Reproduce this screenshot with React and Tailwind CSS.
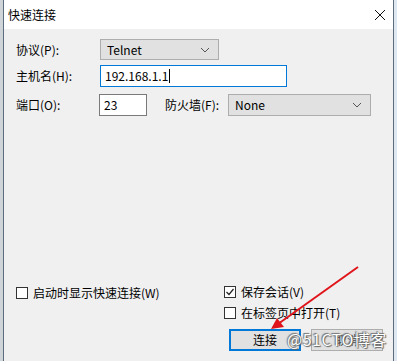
import React from 'react'

const font = { fontFamily: '"Noto Sans CJK SC", "Liberation Sans", sans-serif' }

function Chevron() {
  return (
    <svg width="10" height="6" viewBox="0 0 10 6" className="shrink-0">
      <polyline points="1,1 5,5 9,1" fill="none" stroke="#555" strokeWidth="1" />
    </svg>
  )
}

function Select({ value, className }) {
  return (
    <div
      className={`flex items-center justify-between border border-[#adadad] bg-[#e1e1e1] pl-[6px] pr-[8px] ${className}`}
    >
      <span className="text-[12px] text-black">{value}</span>
      <Chevron />
    </div>
  )
}

function Checkbox({ checked, label }) {
  return (
    <div className="flex items-center h-[13px]">
      <div className="w-[12px] h-[12px] border border-[#333] bg-white flex items-center justify-center">
        {checked && (
          <svg width="10" height="10" viewBox="0 0 10 10">
            <polyline points="1.5,5 4,7.5 8.5,2" fill="none" stroke="#222" strokeWidth="1.2" />
          </svg>
        )}
      </div>
      <span className="ml-[5px] text-[12px] text-black leading-none">{label}</span>
    </div>
  )
}

export default function App() {
  return (
    <div className="w-[397px] h-[361px] bg-[#dfe8f0] relative overflow-hidden" style={font}>
      <div className="absolute left-0 top-0 w-[3px] h-full bg-[#cfd4d8]" />
      <div className="ml-[3px] w-[391px] h-full border-l border-r border-[#5d6d7e] flex flex-col">
        {/* Title bar */}
        <div className="h-[29px] bg-white flex items-center justify-between pl-[4px] pr-[6px]">
          <span className="text-[12px] text-black">快速连接</span>
          <svg width="12" height="12" viewBox="0 0 12 12" className="mr-[1px]">
            <line x1="1" y1="1" x2="11" y2="11" stroke="#111" strokeWidth="1" />
            <line x1="11" y1="1" x2="1" y2="11" stroke="#111" strokeWidth="1" />
          </svg>
        </div>

        {/* Body */}
        <div className="flex-1 bg-[#f0f0f0] pl-[12px] flex flex-col">
          <div className="mt-[10px] flex items-center h-[21px]">
            <span className="w-[84px] text-[12px] text-black">协议(P):</span>
            <Select value="Telnet" className="w-[119px] h-[21px]" />
          </div>

          <div className="mt-[5px] flex items-center h-[22px]">
            <span className="w-[84px] text-[12px] text-black">主机名(H):</span>
            <div className="w-[187px] h-[22px] border border-[#0078d7] bg-white flex items-center pl-[4px]">
              <span className="text-[12px] text-black">192.168.1.1</span>
              <div className="w-px h-[14px] bg-black ml-px" />
            </div>
          </div>

          <div className="mt-[7px] flex items-center h-[22px]">
            <span className="w-[83px] text-[12px] text-black">端口(O):</span>
            <div className="w-[48px] h-[22px] border border-[#7a7a7a] bg-white flex items-center pl-[4px]">
              <span className="text-[12px] text-black">23</span>
            </div>
            <span className="ml-[18px] w-[63px] text-[12px] text-black">防火墙(F):</span>
            <Select value="None" className="w-[143px] h-[22px]" />
          </div>

          <div className="flex-1" />

          <div className="flex mb-[10px]">
            <div className="w-[208px] pt-px">
              <Checkbox label="启动时显示快速连接(W)" />
            </div>
            <div className="flex flex-col">
              <Checkbox checked label="保存会话(V)" />
              <div className="mt-[8px]">
                <Checkbox label="在标签页中打开(T)" />
              </div>
              <div className="mt-[10px] ml-[5px] flex gap-[10px]">
                <div className="w-[72px] h-[22px] border-2 border-[#0078d7] bg-[#e1e1e1] flex items-center justify-center">
                  <span className="text-[12px] text-black">连接</span>
                </div>
                <div className="w-[72px] h-[22px] border border-[#adadad] bg-[#e1e1e1] flex items-center justify-center">
                  <span className="text-[12px] text-[#444]">取消</span>
                </div>
              </div>
            </div>
          </div>
        </div>
      </div>

      {/* watermark */}
      <div
        className="absolute left-[287px] top-[331px] text-[16px] leading-none text-white tracking-[0.5px]"
        style={{ textShadow: '0 0 1px #555, 1px 1px 1px #666, -1px -1px 1px #777' }}
      >
        @51CTO博客
      </div>

      {/* red arrow */}
      <svg className="absolute left-0 top-0" width="397" height="361">
        <line x1="358" y1="267" x2="278" y2="324" stroke="#e0151b" strokeWidth="2" />
        <polygon points="271,329 277,318 284,327" fill="#e0151b" />
      </svg>
    </div>
  )
}
